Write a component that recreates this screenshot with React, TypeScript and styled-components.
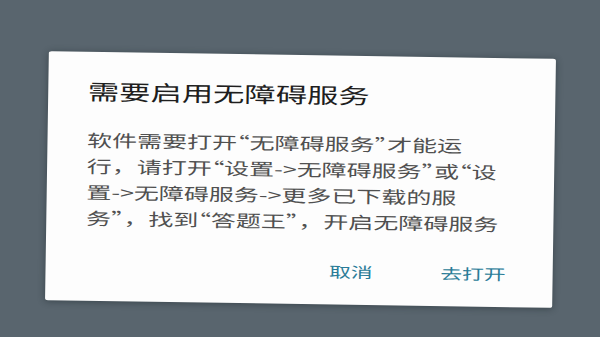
import React from 'react';
import styled, { createGlobalStyle } from 'styled-components';

const GlobalStyle = createGlobalStyle`
  html, body {
    margin: 0;
    padding: 0;
    background: #59656e;
  }
  body {
    font-family: "Noto Sans CJK SC", "Noto Sans", sans-serif;
    overflow: hidden;
  }
`;

const Screen = styled.div`
  box-sizing: border-box;
  width: 600px;
  height: 337px;
  padding-top: 21px;
  display: flex;
  align-items: center;
  justify-content: center;
  background: #59656e;
`;

// the photo is stretched sideways and a little tilted
const Dialog = styled.div`
  box-sizing: border-box;
  width: 345px;
  height: 249px;
  padding: 24px 20px 16px 27px;
  display: flex;
  flex-direction: column;
  background: #fdfdfd;
  border-radius: 2px;
  box-shadow: 0 1px 6px rgba(20, 30, 36, 0.45);
  transform: rotate(0.88deg) scaleX(1.47);
`;

const Title = styled.h2`
  margin: 0;
  font-size: 21.3px;
  font-weight: 400;
  line-height: 30px;
  color: #1e1e1e;
`;

const Message = styled.p`
  margin: 21px 0 0;
  font-size: 17px;
  line-height: 26px;
  white-space: nowrap;
  text-spacing-trim: space-all;
  color: #505050;
`;

// quotes sit in half an em, as on the device
const Quote = styled.span`
  font-feature-settings: "halt" 1;
`;

const Actions = styled.div`
  margin-top: auto;
  display: flex;
  justify-content: flex-end;
  gap: 22px;
`;

const ActionButton = styled.button`
  height: 36px;
  padding: 0 12px;
  border: none;
  background: transparent;
  font-family: inherit;
  font-size: 14.8px;
  color: #2a7c98;
  cursor: pointer;
`;

const App = () => {
  return (
    <>
      <GlobalStyle />
      <Screen>
        <Dialog>
          <Title>需要启用无障碍服务</Title>
          <Message>
            软件需要打开<Quote>“</Quote>无障碍服务<Quote>”</Quote>才能运
            <br />
            行，请打开<Quote>“</Quote>设置-&gt;无障碍服务<Quote>”</Quote>或<Quote>“</Quote>设
            <br />
            置-&gt;无障碍服务-&gt;更多已下载的服
            <br />
            务<Quote>”</Quote>，找到<Quote>“</Quote>答题王<Quote>”</Quote>，开启无障碍服务
          </Message>
          <Actions>
            <ActionButton>取消</ActionButton>
            <ActionButton>去打开</ActionButton>
          </Actions>
        </Dialog>
      </Screen>
    </>
  );
};

export default App;
